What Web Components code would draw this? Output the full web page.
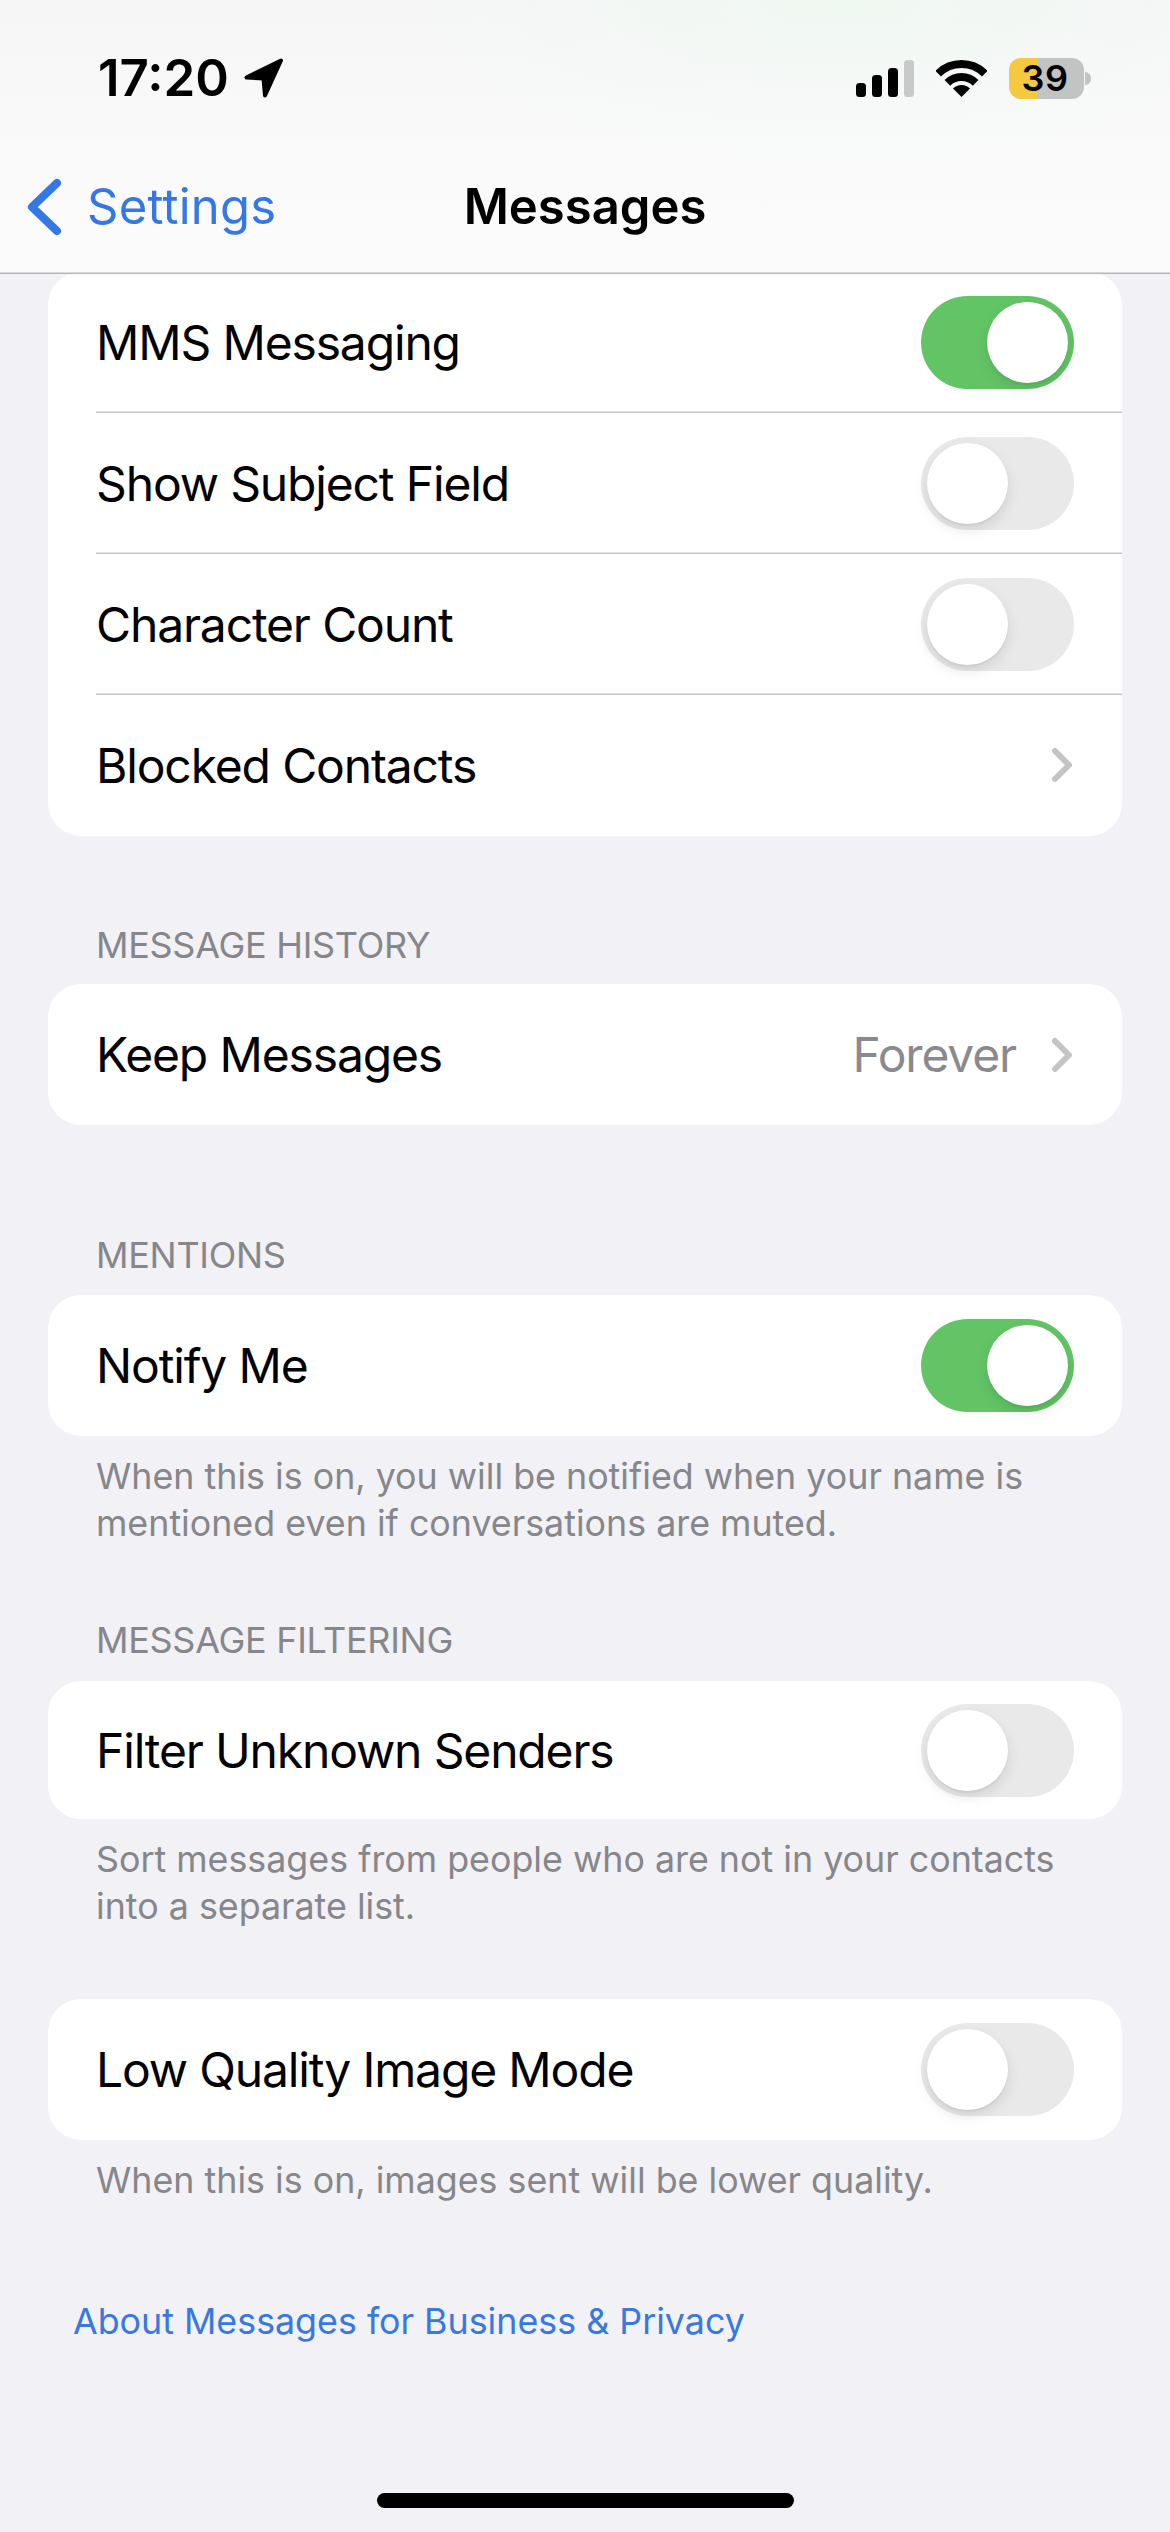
<!DOCTYPE html>
<html lang="en">
<head>
<meta charset="utf-8">
<title>Messages</title>
<style>
  html, body { margin: 0; padding: 0; }
  body {
    width: 1170px;
    height: 2532px;
    overflow: hidden;
    background: #f1f1f6;
    font-family: Inter, "Liberation Sans", sans-serif;
    position: relative;
  }
  ios-section[name="history"] { margin-top: 86px; }
  ios-section[name="mentions"] { margin-top: 107.4px; }
  ios-section[name="filtering"] { margin-top: 70px; --row-height: 138px; --header-bottom: 16.6px; }
  ios-section[name="quality"] { margin-top: 68.6px; }
</style>
</head>
<body>
<ios-header>
  <ios-status-bar time="17:20" battery="39"></ios-status-bar>
  <ios-nav-bar back="Settings" title="Messages"></ios-nav-bar>
</ios-header>

<settings-list>
  <ios-section name="top">
    <ios-row label="MMS Messaging"><ios-toggle on></ios-toggle></ios-row>
    <ios-row label="Show Subject Field"><ios-toggle></ios-toggle></ios-row>
    <ios-row label="Character Count"><ios-toggle></ios-toggle></ios-row>
    <ios-row label="Blocked Contacts" chevron last></ios-row>
  </ios-section>
  <ios-section name="history" header="MESSAGE HISTORY">
    <ios-row label="Keep Messages" value="Forever" chevron last></ios-row>
  </ios-section>
  <ios-section name="mentions" header="MENTIONS" footer="When this is on, you will be notified when your name is mentioned even if conversations are muted.">
    <ios-row label="Notify Me" last><ios-toggle on></ios-toggle></ios-row>
  </ios-section>
  <ios-section name="filtering" header="MESSAGE FILTERING" footer="Sort messages from people who are not in your contacts into a separate list.">
    <ios-row label="Filter Unknown Senders" last><ios-toggle></ios-toggle></ios-row>
  </ios-section>
  <ios-section name="quality" footer="When this is on, images sent will be lower quality.">
    <ios-row label="Low Quality Image Mode" last><ios-toggle></ios-toggle></ios-row>
  </ios-section>
  <ios-link>About Messages for Business &amp; Privacy</ios-link>
</settings-list>

<ios-home-indicator></ios-home-indicator>

<script>
class IosHeader extends HTMLElement {
  connectedCallback() {
    this.attachShadow({ mode: 'open' }).innerHTML = `
      <style>
        :host { display: block; position: relative; z-index: 1; height: 274px; box-sizing: border-box;
                background: radial-gradient(ellipse 420px 160px at 72% 0, rgba(236,250,238,.55), rgba(236,250,238,0)),
                            linear-gradient(180deg, #f6f6f7 0%, #f9f9fa 45%, #fbfbfc 100%);
                box-shadow: inset 0 -1.5px 0 #b6b6b8; }
      </style>
      <slot></slot>`;
  }
}

class IosStatusBar extends HTMLElement {
  connectedCallback() {
    this.attachShadow({ mode: 'open' }).innerHTML = `
      <style>
        :host { display: flex; align-items: center; height: 156px; padding: 0 79px 0 98px; box-sizing: border-box; justify-content: space-between; }
        .left, .right { display: flex; align-items: center; }
        .time { font-size: 51px; font-weight: 600; line-height: 40px; color: #000; }
        .arrow { margin-left: 15px; }
        svg { display: block; }
        .wifi { margin-left: 22px; }
        .batt { margin-left: 22px; width: 75px; height: 41px; border-radius: 12px;
                background: linear-gradient(90deg, #f4c83f 0 29px, #c2c3c3 29px); display: flex; align-items: center; justify-content: center; }
        .batt span { font-size: 36px; font-weight: 600; color: #000; line-height: 41px; letter-spacing: .5px; margin-left: -3px; }
        .nub { width: 6px; height: 13px; background: #c2c3c3; border-radius: 0 7px 7px 0; margin-left: 1px; }
      </style>
      <div class="left">
        <span class="time">${this.getAttribute('time')}</span>
        <svg class="arrow" width="40" height="40" viewBox="0 0 40 40"><path d="M37 2.5 2.5 19.5 19.5 20.5 21 37.5Z" fill="#000" stroke="#000" stroke-width="4" stroke-linejoin="round"/></svg>
      </div>
      <div class="right">
        <svg width="58" height="37" viewBox="0 0 58 37">
          <rect x="0" y="23" width="10" height="14" rx="3.5" fill="#000"/>
          <rect x="16" y="15" width="10" height="22" rx="3.5" fill="#000"/>
          <rect x="32" y="8" width="10" height="29" rx="3.5" fill="#000"/>
          <rect x="48" y="0" width="10" height="37" rx="3.5" fill="#c8c9c9"/>
        </svg>
        <svg class="wifi" width="51" height="37" viewBox="0 0 51 37" fill="none" stroke="#000" stroke-width="8">
          <path d="M2.2 13.7A33 33 0 0 1 48.8 13.7"/>
          <path d="M11.4 22.9A20 20 0 0 1 39.6 22.9"/>
          <path d="M25.5 37 17 28.5A12 12 0 0 1 34 28.5Z" fill="#000" stroke="none"/>
        </svg>
        <div class="batt"><span>${this.getAttribute('battery')}</span></div>
        <div class="nub"></div>
      </div>`;
  }
}

class IosNavBar extends HTMLElement {
  connectedCallback() {
    this.attachShadow({ mode: 'open' }).innerHTML = `
      <style>
        :host { display: grid; grid-template-columns: 1fr auto 1fr; align-items: center; height: 101px; }
        .back { display: flex; align-items: center; gap: 25px; padding-left: 27px; color: #3478e5; font-size: 49px; letter-spacing: .2px; }
        .title { font-size: 49px; font-weight: 600; color: #000; }
        svg { display: block; }
      </style>
      <div class="back">
        <svg width="35" height="58" viewBox="0 0 35 58" fill="none" stroke="#3478e5" stroke-width="8" stroke-linecap="round" stroke-linejoin="round"><path d="M30 5 5 29 30 53"/></svg>
        <span>${this.getAttribute('back')}</span>
      </div>
      <span class="title">${this.getAttribute('title')}</span>`;
  }
}

class SettingsList extends HTMLElement {
  connectedCallback() {
    this.attachShadow({ mode: 'open' }).innerHTML = `
      <style>:host { display: block; margin-top: -2.5px; padding: 0 48px; }</style>
      <slot></slot>`;
  }
}

class IosSection extends HTMLElement {
  connectedCallback() {
    const header = this.getAttribute('header');
    const footer = this.getAttribute('footer');
    this.attachShadow({ mode: 'open' }).innerHTML = `
      <style>
        :host { display: block; }
        .header { font-size: 36px; line-height: 47px; color: #86868b; padding: 0 48px var(--header-bottom, 15.6px); letter-spacing: -.3px; }
        .card { background: #fff; border-radius: 33px; overflow: hidden; }
        .footer { font-size: 35.8px; line-height: 47px; color: #86868b; padding: 17.4px 48px 0; }
      </style>
      ${header ? `<div class="header">${header}</div>` : ''}
      <div class="card"><slot></slot></div>
      ${footer ? `<div class="footer">${footer}</div>` : ''}`;
  }
}

class IosRow extends HTMLElement {
  connectedCallback() {
    const value = this.getAttribute('value');
    const chevron = this.hasAttribute('chevron');
    const sep = this.hasAttribute('last') ? '' : 'box-shadow: inset 0 -1.5px 0 #c6c6c8;';
    this.attachShadow({ mode: 'open' }).innerHTML = `
      <style>
        :host { display: flex; align-items: stretch; height: var(--row-height, 141px); padding-left: 48px; box-sizing: border-box; }
        .inner { flex: 1; display: flex; align-items: center; padding-right: 48px; ${sep} }
        .label { flex: 1; font-size: 48px; color: #000; letter-spacing: -1.15px; }
        .value { font-size: 48px; color: #8a8a8e; letter-spacing: -1.15px; margin-right: 34px; }
        svg { display: block; }
      </style>
      <div class="inner">
        <span class="label">${this.getAttribute('label')}</span>
        ${value ? `<span class="value">${value}</span>` : ''}
        ${chevron ? `<svg width="24" height="38" viewBox="0 0 24 38" fill="none" stroke="#c4c4c6" stroke-width="6" stroke-linecap="round" stroke-linejoin="round"><path d="M5 5 19 19 5 33"/></svg>` : ''}
        <slot></slot>
      </div>`;
  }
}

class IosToggle extends HTMLElement {
  connectedCallback() {
    const on = this.hasAttribute('on');
    this.attachShadow({ mode: 'open' }).innerHTML = `
      <style>
        :host { display: flex; width: 153px; height: 93px; padding: 6px; box-sizing: border-box; border-radius: 47px;
                background: ${on ? '#63c466' : '#e9e9ea'}; justify-content: ${on ? 'flex-end' : 'flex-start'}; }
        .knob { width: 81px; height: 81px; border-radius: 50%; background: #fff;
                box-shadow: 0 6px 14px rgba(0,0,0,.1), 0 2px 2px rgba(0,0,0,.05); }
      </style>
      <div class="knob"></div>`;
  }
}

class IosLink extends HTMLElement {
  connectedCallback() {
    this.attachShadow({ mode: 'open' }).innerHTML = `
      <style>:host { display: block; margin-top: 94px; padding-left: 25px; font-size: 35.8px; line-height: 47px; color: #3878e0; }</style>
      <slot></slot>`;
  }
}

class IosHomeIndicator extends HTMLElement {
  connectedCallback() {
    this.attachShadow({ mode: 'open' }).innerHTML = `
      <style>:host { position: absolute; left: 377px; top: 2493px; width: 417px; height: 15px; border-radius: 8px; background: #000; }</style>`;
  }
}

customElements.define('ios-header', IosHeader);
customElements.define('ios-status-bar', IosStatusBar);
customElements.define('ios-nav-bar', IosNavBar);
customElements.define('settings-list', SettingsList);
customElements.define('ios-section', IosSection);
customElements.define('ios-row', IosRow);
customElements.define('ios-toggle', IosToggle);
customElements.define('ios-link', IosLink);
customElements.define('ios-home-indicator', IosHomeIndicator);
</script>
</body>
</html>
